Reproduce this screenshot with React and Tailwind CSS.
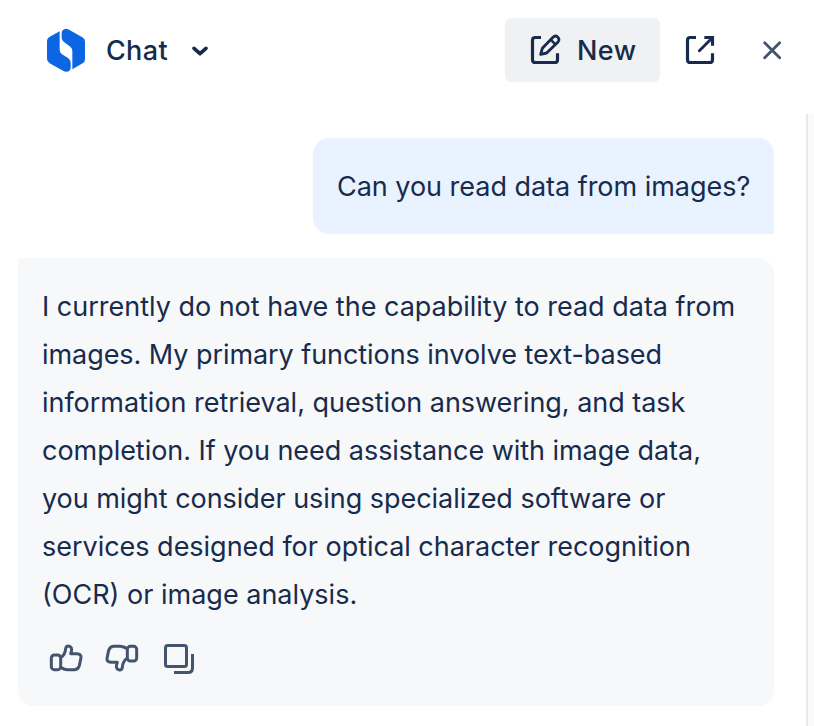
const lines = [
  ['I currently do not have the capability to read data from', 'tracking-[-0.01px]'],
  ['images. My primary functions involve text-based', 'tracking-[-0.06px]'],
  ['information retrieval, question answering, and task', 'tracking-[-0.03px]'],
  ['completion. If you need assistance with image data,', 'tracking-[-0.04px]'],
  ['you might consider using specialized software or', 'tracking-[-0.04px]'],
  ['services designed for optical character recognition', 'tracking-[-0.02px]'],
  ['(OCR) or image analysis.', 'tracking-[0px]'],
];

function Logo() {
  return (
    <svg className="h-[44px] w-[40px] shrink-0" viewBox="48 38 120 132" fill="#0C66E4">
      <path d="M89 48V104Q89 112 95 116L115 129Q122 134 122 142V158Q121 169 109 169Q104 169 99 166L59 144Q51 139 51 131V77Q51 69 58 65Z" />
      <path d="M127 162V108Q127 99 121 94L102 80Q95 75 95 67V52Q96 41 108 40Q112 40 117 43L157 66Q165 70 165 78V132Q165 140 158 144Z" />
    </svg>
  );
}

function Thumb({ down }) {
  return (
    <svg className="h-8 w-[34px]" viewBox="57 34 102 96" fill="none" stroke="#44546F" strokeWidth="9" strokeLinejoin="round">
      <g transform={down ? 'rotate(180 108 82)' : undefined}>
        <rect x="64" y="73" width="28" height="44" rx="9" />
        <path d="M92 81C102 75 106 66 107 54Q108 46 115 46Q124 47 125 56Q125 62 122 69H141Q154 70 153 81L148 105Q145 116 134 117.500H113Q104 117 92 110" />
      </g>
    </svg>
  );
}

export default function App() {
  return (
    <div className="flex h-[726px] w-[814px] flex-col overflow-hidden bg-white font-['Inter','Liberation_Sans',sans-serif] text-[27px] text-[#172B4D]">
      <header className="flex h-[114px] shrink-0 items-start pt-[18px] pl-[46px]">
        <button className="flex h-16 w-[200px] items-center">
          <Logo />
          <span className="mt-0.5 ml-[18px] w-[66px] font-medium tracking-[0.4px] whitespace-nowrap">Chat</span>
          <svg className="mt-px ml-[20px] h-4 w-5" viewBox="480 83 60 48" fill="none" stroke="#172B4D" strokeWidth="11" strokeLinecap="round" strokeLinejoin="round">
            <path d="M492 99L510 115L528 99" />
          </svg>
        </button>
        <button className="ml-[259px] flex h-16 w-[155px] items-center rounded-[6px] bg-[#F0F1F2] pl-6">
          <svg className="h-8 w-8" viewBox="102 72 96 96" fill="none" stroke="#172B4D" strokeWidth="9.5" strokeLinejoin="round">
            <path d="M138 82.500H121Q112.500 82.500 112.500 91V149Q112.500 157.500 121 157.500H179Q187.500 157.500 187.500 149V130" />
            <path d="M137 133L142 115L174 82Q181 75 188 81Q195 88 189 96L155 129Z" strokeWidth="8.500" />
            <path d="M167 89L182 104" strokeWidth="7.500" />
          </svg>
          <span className="mt-0.5 ml-4 font-medium tracking-[0.4px]">New</span>
        </button>
        <button className="ml-6 flex h-16 w-8 items-center">
          <svg className="h-8 w-8" viewBox="567 72 96 96" fill="none" stroke="#172B4D" strokeWidth="9.5" strokeLinejoin="round">
            <path d="M603 82.500H586Q577.500 82.500 577.500 91V149Q577.500 157.500 586 157.500H644Q652.500 157.500 652.500 149V130" />
            <path d="M628 82.500H652.500V107" strokeLinejoin="miter" />
            <path d="M613 122L652 83" strokeWidth="8.500" strokeLinecap="round" />
          </svg>
        </button>
        <button className="ml-[46px] flex h-16 w-5 items-center">
          <svg className="h-5 w-5" viewBox="801 90 60 60" fill="none" stroke="#44546F" strokeWidth="8.5" strokeLinecap="round">
            <path d="M809 98L854 143M854 98L809 143" />
          </svg>
        </button>
      </header>
      <div className="flex min-h-0 flex-1">
        <main className="flex w-[806px] flex-col gap-6 pt-6 pr-8 pl-[18px]">
          <div className="flex h-24 w-[461px] shrink-0 items-center self-end rounded-2xl rounded-br-[3px] bg-[#E9F2FF] pt-0.5 pl-6 leading-[48px] whitespace-nowrap">
            <span className="tracking-[-0.03px]">Can you read data from images?</span>
          </div>
          <div className="flex h-[448px] shrink-0 flex-col rounded-2xl rounded-tl-[3px] bg-[#F7F8F9] pt-[25px] pl-6">
            {lines.map(([text, tracking]) => (
              <p key={text} className={`h-12 leading-[48px] whitespace-nowrap ${tracking}`}>{text}</p>
            ))}
            <div className="mt-[23px] flex h-9 items-start pl-[7px]">
              <Thumb />
              <div className="ml-[22px]"><Thumb down /></div>
              <svg className="ml-[24px] h-9 w-[34px]" viewBox="399 36 102 108" fill="none" stroke="#44546F" strokeWidth="9">
                <rect x="406.500" y="46.500" width="63" height="63" rx="7" />
                <path d="M487.500 72V114Q487.500 127.500 474 127.500H432" />
              </svg>
            </div>
          </div>
        </main>
        <div className="w-2 border-l-2 border-[#E8E8E8] bg-[#FAFAFA]" />
      </div>
    </div>
  );
}
